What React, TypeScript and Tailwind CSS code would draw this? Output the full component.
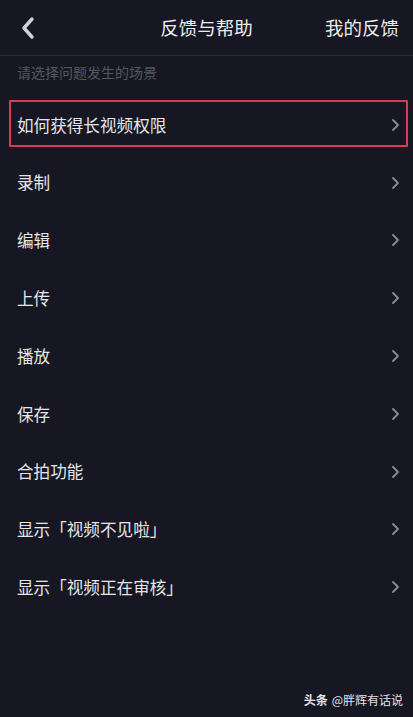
const items = [
  "如何获得长视频权限",
  "录制",
  "编辑",
  "上传",
  "播放",
  "保存",
  "合拍功能",
  "显示「视频不见啦」",
  "显示「视频正在审核」",
];

function Chevron() {
  return (
    <svg width="9" height="14" viewBox="0 0 9 14" fill="none" className="shrink-0">
      <path d="M2 2l5 5-5 5" stroke="#8b8c93" strokeWidth="1.8" strokeLinecap="round" strokeLinejoin="round" />
    </svg>
  );
}

export default function App() {
  return (
    <div
      className="w-[413px] h-[717px] bg-[#161722] text-[#e6e6e8] flex flex-col relative overflow-hidden"
      style={{ fontFamily: '"Noto Sans CJK SC", "Noto Sans", sans-serif' }}
    >
      {/* header */}
      <div className="h-[56px] flex items-center pl-[18px] pr-[14px] relative border-b border-[#2c2d37]">
        <svg width="18" height="24" viewBox="0 0 18 24" fill="none" className="ml-[1px]">
          <path d="M13 3L5 12l8 9" stroke="#d2d2d6" strokeWidth="3.4" strokeLinecap="round" strokeLinejoin="round" />
        </svg>
        <div className="absolute left-0 right-0 text-center text-[18.5px] text-[#ededef] pointer-events-none">
          反馈与帮助
        </div>
        <div className="ml-auto text-[18.5px] text-[#ededef]">我的反馈</div>
      </div>

      {/* hint */}
      <div className="h-[40px] px-[17px] pt-[6px] text-[14px] text-[#55575f]">请选择问题发生的场景</div>

      {/* list */}
      <div className="flex flex-col">
        {items.map((t, i) => (
          <div key={t} className="relative h-[57.8px] flex items-center pl-[17px] pr-[13px]">
            <span className="text-[16.6px] leading-none">{t}</span>
            <span className="ml-auto">
              <Chevron />
            </span>
            {i === 0 && (
              <div className="absolute left-[9px] right-[5px] top-[4px] bottom-[7px] border-2 border-[#d43f4d] rounded-[1px]" />
            )}
          </div>
        ))}
      </div>

      {/* watermark */}
      <div className="absolute right-[10px] bottom-[8px] text-[12px] text-[#e4e4e6] flex items-center gap-[4px]">
        <span className="font-bold">头条</span>
        <span>@胖辉有话说</span>
      </div>
    </div>
  );
}
